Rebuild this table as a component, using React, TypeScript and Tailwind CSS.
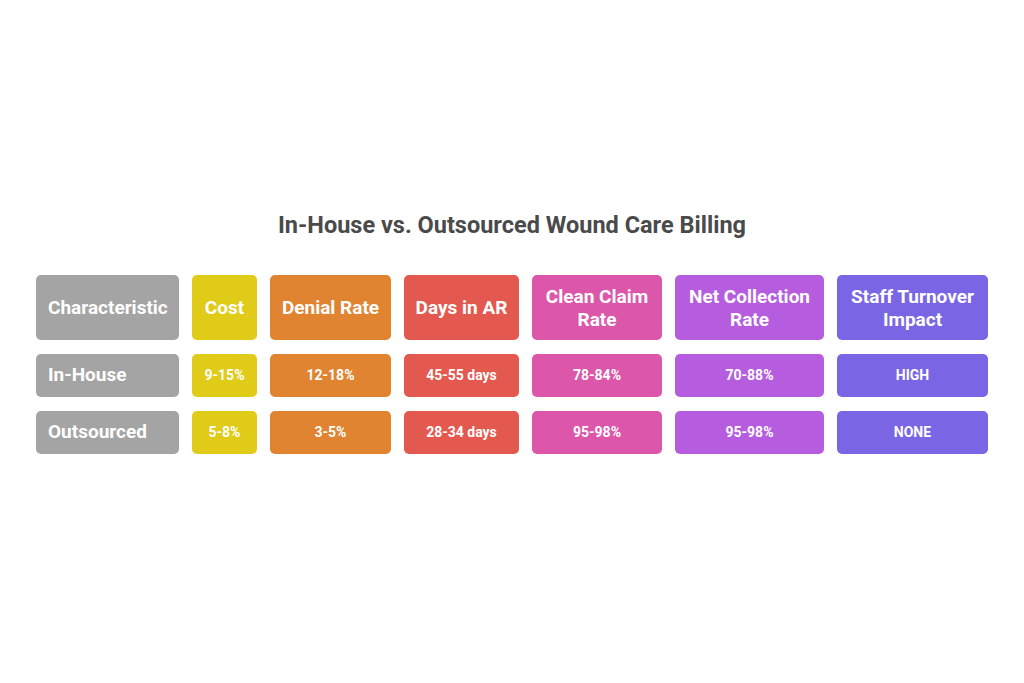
const columns = [
  { label: "Characteristic", bg: "bg-[#a4a4a4]", first: true },
  { label: "Cost", bg: "bg-[#dfcb18]" },
  { label: "Denial Rate", bg: "bg-[#e08431]" },
  { label: "Days in AR", bg: "bg-[#e4594f]" },
  { label: "Clean Claim Rate", bg: "bg-[#dc57aa]" },
  { label: "Net Collection Rate", bg: "bg-[#b65ddf]" },
  { label: "Staff Turnover Impact", bg: "bg-[#7a66e5]" },
];

const rows = [
  ["In-House", "9-15%", "12-18%", "45-55 days", "78-84%", "70-88%", "HIGH"],
  ["Outsourced", "5-8%", "3-5%", "28-34 days", "95-98%", "95-98%", "NONE"],
];

const App = () => {
  return (
    <div className="w-[1024px] h-[683px] bg-white flex flex-col items-center pt-[211px] font-['Roboto',sans-serif]">
      <h1 className="text-[23.5px] leading-[28px] font-bold text-[#4a4a4a] mb-[36px]">
        In-House vs. Outsourced Wound Care Billing
      </h1>
      <div className="grid grid-cols-[143px_65px_121px_115px_130px_149px_151px] grid-rows-[65px_43px_43px] gap-x-[13px] gap-y-[14px]">
        {columns.map((c) => (
          <div
            key={c.label}
            className={`${c.bg} rounded-[5px] flex items-center text-white font-bold text-[19px] leading-[23px] ${
              c.first ? "justify-start px-3" : "justify-center text-center px-2"
            }`}
          >
            {c.label}
          </div>
        ))}
        {rows.map((r) =>
          r.map((v, i) => (
            <div
              key={r[0] + i}
              className={`${columns[i].bg} rounded-[5px] flex items-center text-white font-bold ${
                i === 0 ? "justify-start px-3 text-[19px]" : "justify-center text-[14px]"
              }`}
            >
              {v}
            </div>
          ))
        )}
      </div>
    </div>
  );
};

export default App;
